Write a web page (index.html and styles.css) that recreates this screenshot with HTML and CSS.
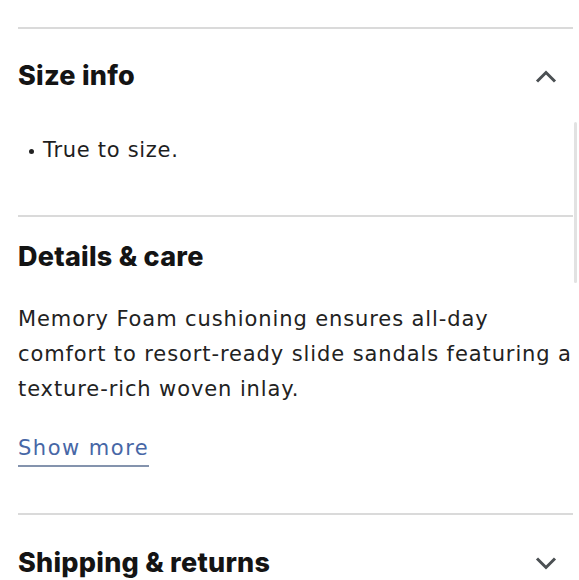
FILE: index.html
```html
<!DOCTYPE html>
<html>
<head>
<meta charset="utf-8">
<link rel="stylesheet" href="styles.css">
</head>
<body>
<div class="page">
  <section class="acc acc-open">
    <div class="acc-head">
      <h2 class="acc-title">Size info</h2>
      <svg class="chev" viewBox="0 0 22 13" width="22" height="13"><path d="M2 11.5 L11 2.5 L20 11.5" fill="none" stroke="#4b5053" stroke-width="3"/></svg>
    </div>
    <ul class="bullets">
      <li>True to size.</li>
    </ul>
  </section>
  <section class="acc acc-details">
    <div class="acc-head">
      <h2 class="acc-title">Details &amp; care</h2>
    </div>
    <p class="para">Memory Foam cushioning ensures all-day comfort to resort-ready slide sandals featuring a texture-rich woven inlay.</p>
    <a class="more" href="#">Show more</a>
  </section>
  <section class="acc acc-ship">
    <div class="acc-head">
      <h2 class="acc-title">Shipping &amp; returns</h2>
      <svg class="chev" viewBox="0 0 22 13" width="22" height="13"><path d="M2 1.5 L11 10.5 L20 1.5" fill="none" stroke="#4b5053" stroke-width="3"/></svg>
    </div>
  </section>
</div>
<div class="scrollbar"></div>
</body>
</html>
```

FILE: styles.css
```css
html, body {
  margin: 0;
  padding: 0;
  background: #ffffff;
}
body {
  font-family: "DejaVu Sans", Inter, sans-serif;
  color: #1e1e1e;
  overflow: hidden;
  height: 580px;
  position: relative;
}
.page {
  padding: 27px 6px 0 18px;
}
.acc {
  border-top: 2px solid #dadada;
}
.acc-head {
  display: flex;
  align-items: center;
  justify-content: space-between;
  height: 32px;
  padding-right: 16px;
}
.acc-title {
  margin: 0;
  font-family: Inter, "Liberation Sans", sans-serif;
  font-size: 27px;
  line-height: 32px;
  font-weight: 800;
  letter-spacing: 0.25px;
  color: #141414;
}
.acc-open .acc-head {
  margin-top: 31px;
}
.bullets {
  margin: 41px 0 0 0;
  padding: 0 0 0 25px;
  font-size: 21px;
  line-height: 35px;
  letter-spacing: 0.7px;
  height: 35px;
  padding-bottom: 47px;
}
.bullets li {
  list-style: none;
  position: relative;
}
.bullets li::before {
  content: "";
  position: absolute;
  left: -14px;
  top: 16px;
  width: 5px;
  height: 5px;
  border-radius: 50%;
  background: #222;
}
.acc-details .acc-head {
  margin-top: 24px;
}
.para {
  margin: 29px 0 0 0;
  font-size: 21px;
  line-height: 35px;
  letter-spacing: 0.9px;
  color: #222;
}
.more {
  display: inline-block;
  margin-top: 24px;
  font-size: 21px;
  line-height: 34px;
  letter-spacing: 1.5px;
  color: #4767a6;
  text-decoration: none;
  border-bottom: 2px solid #8493ad;
  margin-bottom: 46px;
}
.acc-ship .acc-head {
  margin-top: 32px;
}
.scrollbar {
  position: absolute;
  left: 574px;
  top: 122px;
  width: 3px;
  height: 161px;
  background: #e2e2e2;
  border-radius: 2px;
}
```
